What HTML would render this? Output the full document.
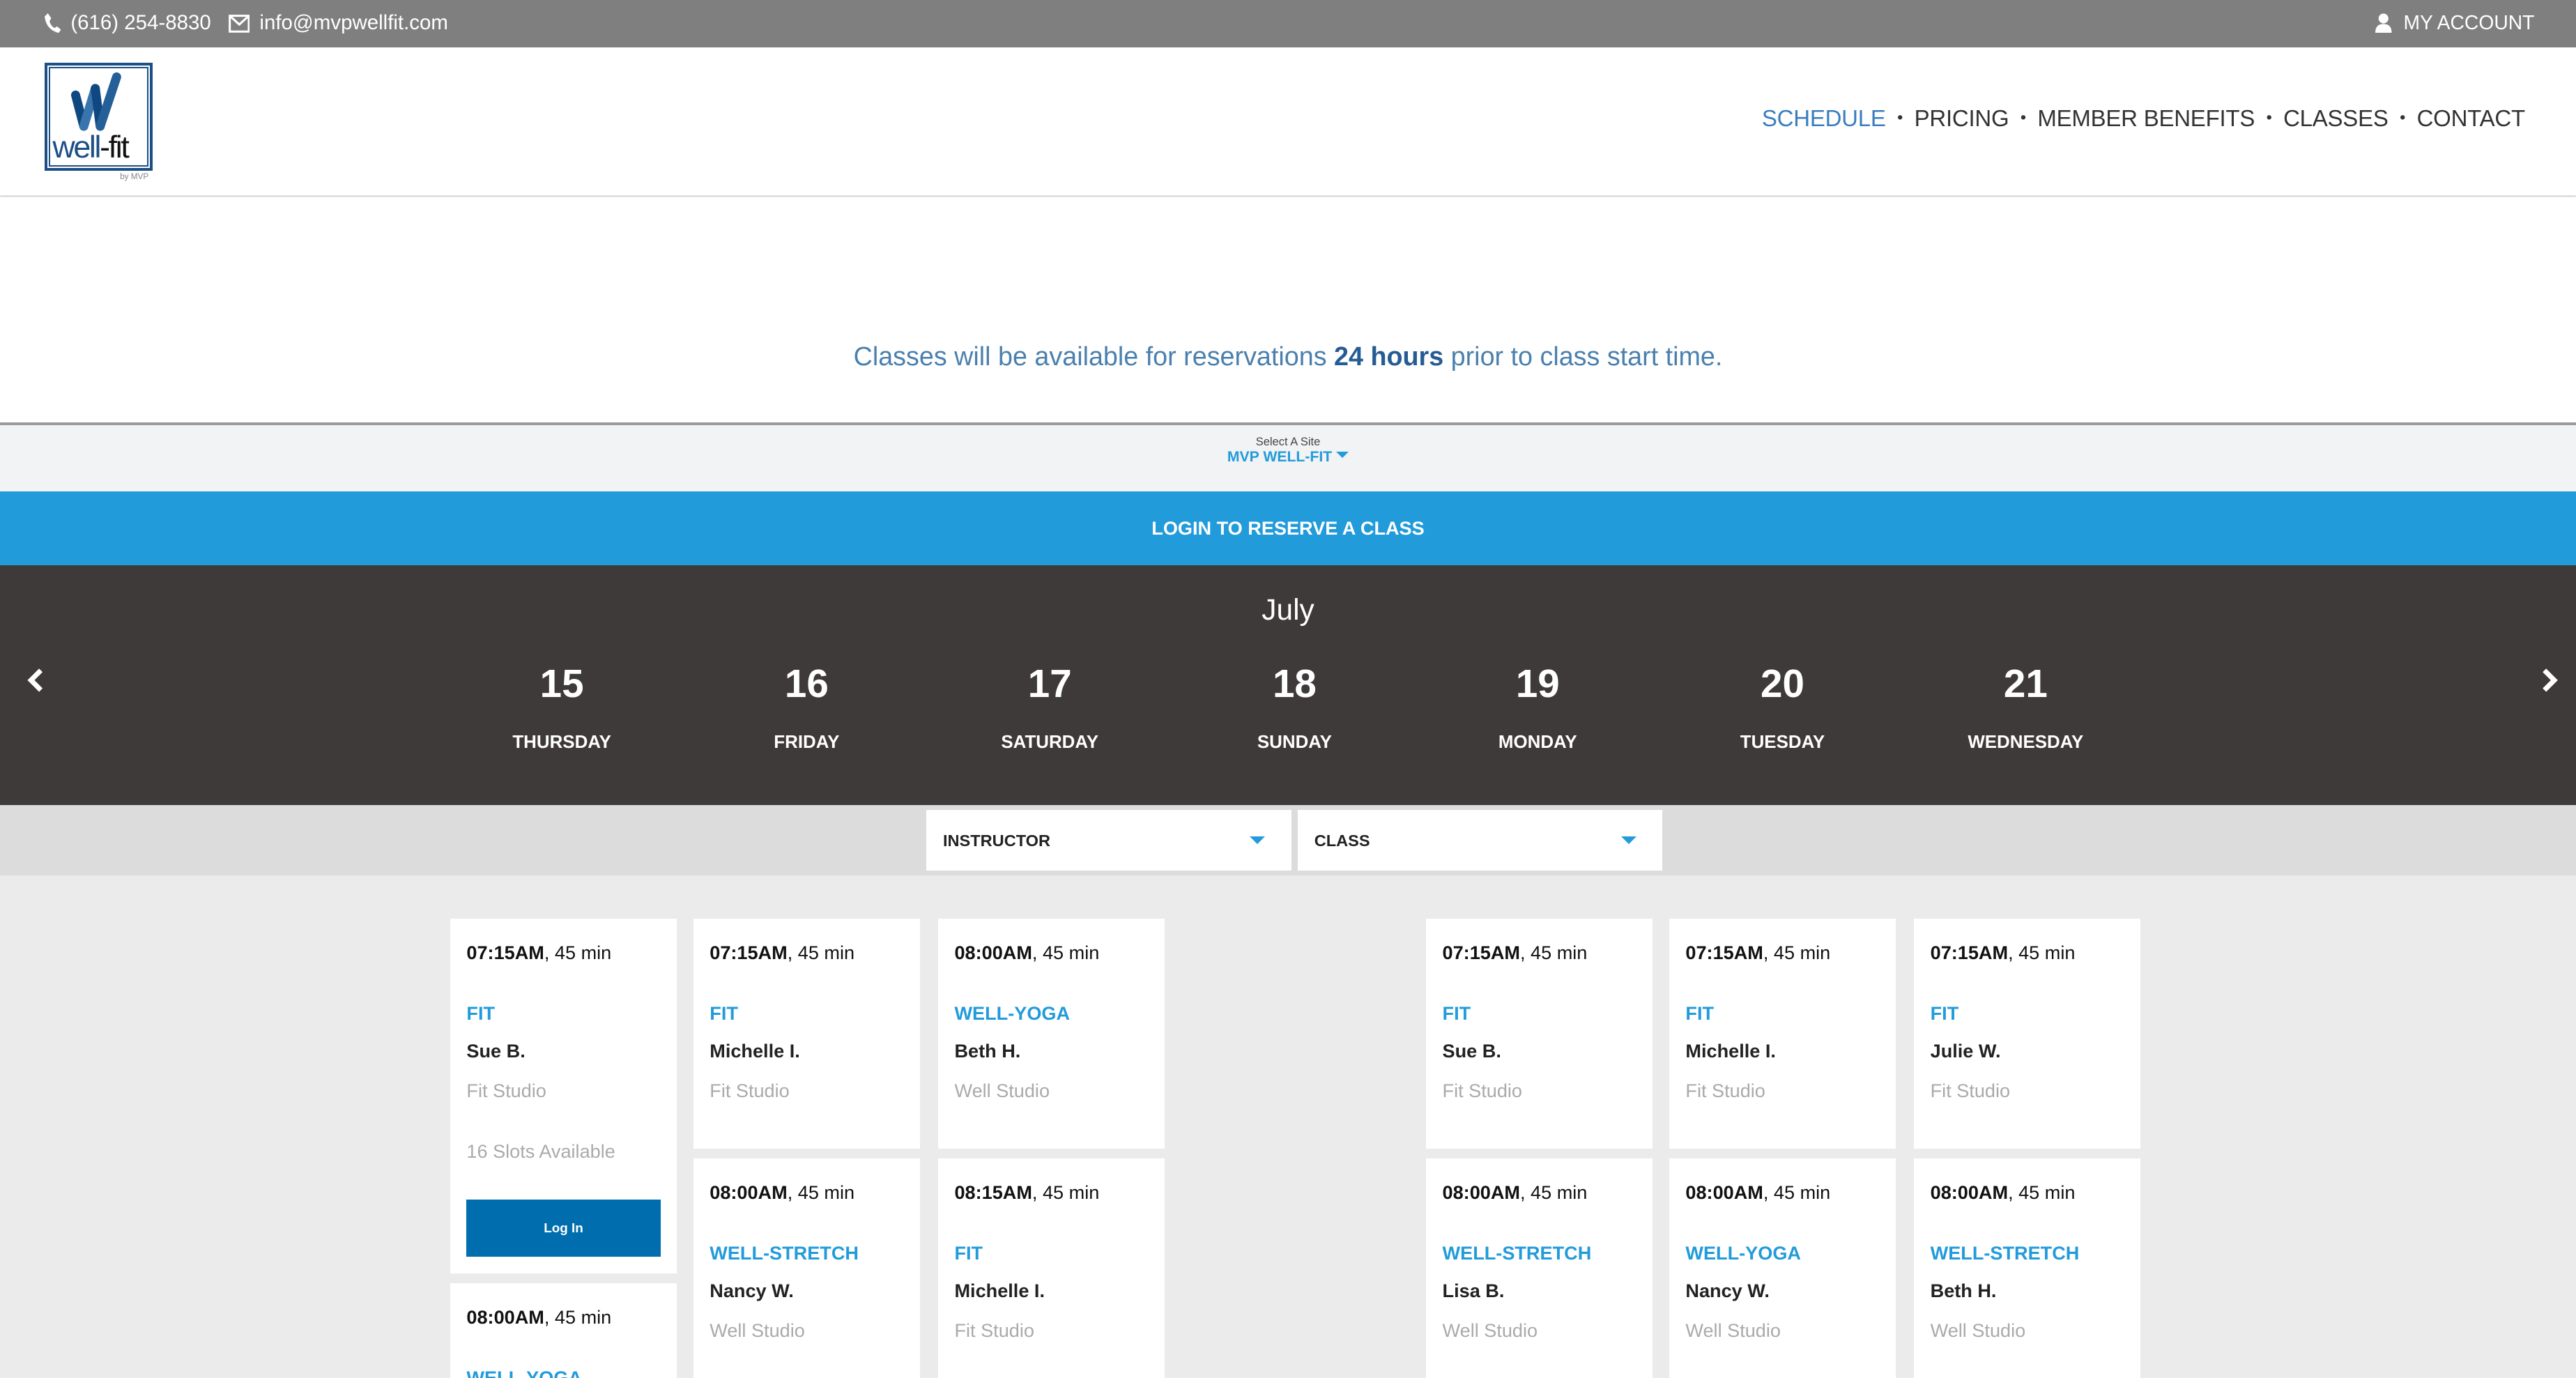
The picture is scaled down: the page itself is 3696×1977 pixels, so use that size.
<!DOCTYPE html>
<html><head><meta charset="utf-8"><style>
*{margin:0;padding:0;box-sizing:border-box}
html,body{width:3696px;height:1977px;overflow:hidden;background:#ebebeb}
#w{zoom:2.35714;width:1568px;height:839px;position:relative;font-family:"Liberation Sans",sans-serif;overflow:hidden}
.a{position:absolute}
.top{left:0;top:0;width:1568px;height:29px;background:#7f7f7f;color:#fff;font-size:12.5px}
.hdr{left:0;top:29px;width:1568px;height:90px;background:#fff;box-shadow:0 2px 3px rgba(0,0,0,.06)}
.nav{right:31px;top:35px;font-size:14px;color:#333;letter-spacing:-.1px}
.nav span.d{margin:0 7px;font-size:10px;position:relative;top:-2px}
.msg{left:0;top:120px;width:1568px;height:137px;background:#fff;text-align:center}
.days div{position:absolute;width:140px;text-align:center;color:#fff}
.card{position:absolute;width:138px;background:#fff;font-size:11.5px;padding-left:10px}
.card .t{position:absolute;top:14px;color:#111}
.card .c{position:absolute;top:51px;color:#229bdb;font-weight:bold}
.card .i{position:absolute;top:74px;color:#222;font-weight:bold}
.card .s{position:absolute;top:98px;color:#aaa}
.dd{position:absolute;top:493px;width:222px;height:37px;background:#fff;font-size:10px;font-weight:bold;color:#222;padding:13px 10px}
.dd:after{content:"";position:absolute;right:16px;top:16px;border-left:5px solid transparent;border-right:5px solid transparent;border-top:5px solid #229bdb}
</style></head><body><div id="w">
<div class="a top">
<svg class="a" style="left:27px;top:8px" width="10" height="12" viewBox="0 0 10 12"><path d="M2 0 L4 3 L3 5 Q4 8 6 9 L7.5 8 L10 10 L8.5 12 Q1 10 0 2 Z" fill="#fff"/></svg>
<span class="a" style="left:43px;top:7px">(616) 254-8830</span>
<svg class="a" style="left:139px;top:9px" width="13" height="11" viewBox="0 0 13 11"><rect x=".7" y=".7" width="11.6" height="9.6" fill="none" stroke="#fff" stroke-width="1.3"/><path d="M1 1 L6.5 6 L12 1" fill="none" stroke="#fff" stroke-width="1.3"/></svg>
<span class="a" style="left:158px;top:7px">info@mvpwellfit.com</span>
<svg class="a" style="left:1446px;top:8px" width="10" height="12" viewBox="0 0 10 12"><circle cx="5" cy="3.2" r="3" fill="#fff"/><path d="M0 12 Q0 6.5 5 6.5 Q10 6.5 10 12Z" fill="#fff"/></svg>
<span class="a" style="left:1463px;top:7px;font-size:12px">MY ACCOUNT</span>
</div>
<div class="a hdr">
<div class="a" style="left:27px;top:9px;width:66px;height:66px;border:2px solid #1c4f86;padding:1px"><div style="width:100%;height:100%;border:1px solid #1c4f86"></div></div>
<svg class="a" style="left:42px;top:14px" width="36" height="38" viewBox="0 0 36 38"><path d="M4 15 L9 34" stroke="#0f4880" stroke-width="5.5" stroke-linecap="round"/><path d="M9 34 L16 11" stroke="#3a74ad" stroke-width="5.5" stroke-linecap="round"/><path d="M16 11 L19 34" stroke="#0f4880" stroke-width="5.5" stroke-linecap="round"/><path d="M19 34 L29 4" stroke="#245f98" stroke-width="5.5" stroke-linecap="round"/></svg>
<div class="a" style="left:32px;top:50px;font-size:19px;color:#1c4f86;letter-spacing:-1px;font-weight:300">well<span style="color:#111">-fit</span></div>
<div class="a" style="left:73px;top:76px;font-size:5px;color:#888">by MVP</div>
<div class="a nav"><span style="color:#3b7dbf">SCHEDULE</span><span class="d">•</span>PRICING<span class="d">•</span>MEMBER BENEFITS<span class="d">•</span>CLASSES<span class="d">•</span>CONTACT</div>
</div>
<div class="a msg"><div style="margin-top:88px;font-size:16px;color:#4b80ae">Classes will be available for reservations <b style="color:#265c93">24 hours</b> prior to class start time.</div></div>
<div class="a" style="left:0;top:257px;width:1568px;height:2px;background:#9a9a9a"></div>
<div class="a" style="left:0;top:259px;width:1568px;height:40px;background:#f1f3f4;text-align:center">
<div style="font-size:7px;color:#444;margin-top:6px">Select A Site</div>
<div style="font-size:9px;color:#229bdb;font-weight:bold">MVP WELL-FIT <span style="display:inline-block;border-left:4px solid transparent;border-right:4px solid transparent;border-top:4px solid #229bdb;vertical-align:2px"></span></div>
</div>
<div class="a" style="left:0;top:299px;width:1568px;height:45px;background:#229bdb;color:#fff;font-size:11.5px;font-weight:bold;text-align:center;line-height:45px">LOGIN TO RESERVE A CLASS</div>
<div class="a" style="left:0;top:344px;width:1568px;height:146px;background:#3f3a3a">
<div class="a" style="left:0;width:1568px;top:17px;text-align:center;color:#fff;font-size:18px">July</div>
<svg class="a" style="left:15px;top:62px" width="12" height="16" viewBox="0 0 12 16"><path d="M10 2 L4 8 L10 14" stroke="#fff" stroke-width="3" fill="none"/></svg>
<svg class="a" style="left:1547px;top:62px" width="12" height="16" viewBox="0 0 12 16"><path d="M2 2 L8 8 L2 14" stroke="#fff" stroke-width="3" fill="none"/></svg>
<div class="days">
<div style="left:272px;top:58px;font-size:24px;font-weight:bold">15</div><div style="left:272px;top:102px;font-size:11px;font-weight:bold">THURSDAY</div>
<div style="left:421px;top:58px;font-size:24px;font-weight:bold">16</div><div style="left:421px;top:102px;font-size:11px;font-weight:bold">FRIDAY</div>
<div style="left:569px;top:58px;font-size:24px;font-weight:bold">17</div><div style="left:569px;top:102px;font-size:11px;font-weight:bold">SATURDAY</div>
<div style="left:718px;top:58px;font-size:24px;font-weight:bold">18</div><div style="left:718px;top:102px;font-size:11px;font-weight:bold">SUNDAY</div>
<div style="left:866px;top:58px;font-size:24px;font-weight:bold">19</div><div style="left:866px;top:102px;font-size:11px;font-weight:bold">MONDAY</div>
<div style="left:1015px;top:58px;font-size:24px;font-weight:bold">20</div><div style="left:1015px;top:102px;font-size:11px;font-weight:bold">TUESDAY</div>
<div style="left:1163px;top:58px;font-size:24px;font-weight:bold">21</div><div style="left:1163px;top:102px;font-size:11px;font-weight:bold">WEDNESDAY</div>
</div></div>
<div class="a" style="left:0;top:490px;width:1568px;height:43px;background:#dcdcdc"></div>
<div class="dd" style="left:564px">INSTRUCTOR</div>
<div class="dd" style="left:790px">CLASS</div>

<div class="card" style="left:274px;top:559px;height:216px"><div class="t"><b>07:15AM</b>, 45 min</div><div class="c">FIT</div><div class="i">Sue B.</div><div class="s">Fit Studio</div><div class="s" style="top:135px">16 Slots Available</div><div class="a" style="left:10px;top:171px;width:118px;height:35px;background:#006eae;color:#fff;font-size:8px;font-weight:bold;text-align:center;line-height:35px">Log In</div></div>
<div class="card" style="left:274px;top:781px;height:80px"><div class="t"><b>08:00AM</b>, 45 min</div><div class="c">WELL-YOGA</div></div>

<div class="card" style="left:422px;top:559px;height:140px"><div class="t"><b>07:15AM</b>, 45 min</div><div class="c">FIT</div><div class="i">Michelle I.</div><div class="s">Fit Studio</div></div>
<div class="card" style="left:422px;top:705px;height:160px"><div class="t"><b>08:00AM</b>, 45 min</div><div class="c">WELL-STRETCH</div><div class="i">Nancy W.</div><div class="s">Well Studio</div></div>

<div class="card" style="left:571px;top:559px;height:140px"><div class="t"><b>08:00AM</b>, 45 min</div><div class="c">WELL-YOGA</div><div class="i">Beth H.</div><div class="s">Well Studio</div></div>
<div class="card" style="left:571px;top:705px;height:160px"><div class="t"><b>08:15AM</b>, 45 min</div><div class="c">FIT</div><div class="i">Michelle I.</div><div class="s">Fit Studio</div></div>

<div class="card" style="left:868px;top:559px;height:140px"><div class="t"><b>07:15AM</b>, 45 min</div><div class="c">FIT</div><div class="i">Sue B.</div><div class="s">Fit Studio</div></div>
<div class="card" style="left:868px;top:705px;height:160px"><div class="t"><b>08:00AM</b>, 45 min</div><div class="c">WELL-STRETCH</div><div class="i">Lisa B.</div><div class="s">Well Studio</div></div>

<div class="card" style="left:1016px;top:559px;height:140px"><div class="t"><b>07:15AM</b>, 45 min</div><div class="c">FIT</div><div class="i">Michelle I.</div><div class="s">Fit Studio</div></div>
<div class="card" style="left:1016px;top:705px;height:160px"><div class="t"><b>08:00AM</b>, 45 min</div><div class="c">WELL-YOGA</div><div class="i">Nancy W.</div><div class="s">Well Studio</div></div>

<div class="card" style="left:1165px;top:559px;height:140px"><div class="t"><b>07:15AM</b>, 45 min</div><div class="c">FIT</div><div class="i">Julie W.</div><div class="s">Fit Studio</div></div>
<div class="card" style="left:1165px;top:705px;height:160px"><div class="t"><b>08:00AM</b>, 45 min</div><div class="c">WELL-STRETCH</div><div class="i">Beth H.</div><div class="s">Well Studio</div></div>
</div></body></html>
